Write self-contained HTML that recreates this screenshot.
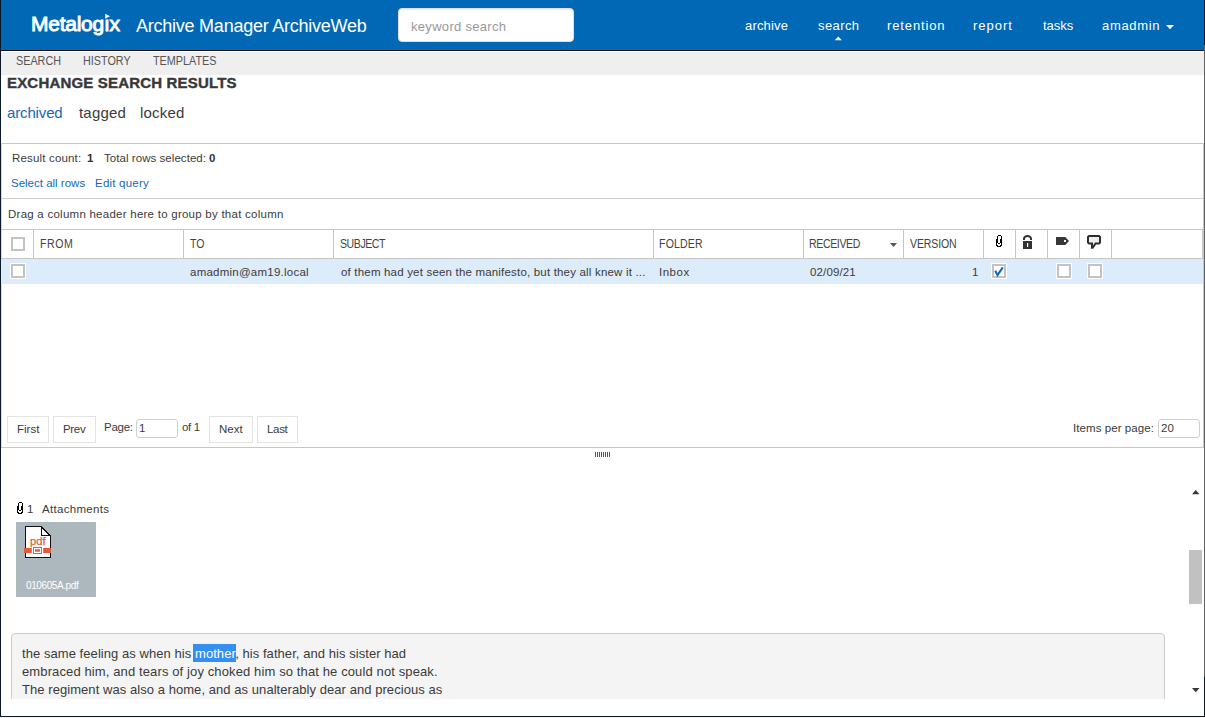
<!DOCTYPE html>
<html><head><meta charset="utf-8"><title>Archive Manager ArchiveWeb</title>
<style>
html,body{margin:0;padding:0}
body{width:1205px;height:718px;overflow:hidden;position:relative;background:#fff;font-family:"Liberation Sans",sans-serif}
.a{position:absolute}
.t{position:absolute;white-space:nowrap;font-family:"Liberation Sans",sans-serif}
.vs{position:absolute;width:1px;background:#c6c6c6}
.cb{position:absolute;box-sizing:border-box;width:14px;height:14px;border:2px solid #c3c3c3;background:#fff}
.btn{position:absolute;box-sizing:border-box;height:27px;border:1px solid #e3e3e3;background:#fff}
</style></head><body>
<!-- header -->
<div class="a" style="left:0;top:0;width:1205px;height:50px;background:#0168b6"></div>
<div class="a" style="left:0;top:50px;width:1205px;height:1px;background:#0c0f14"></div>
<div class="a" style="left:398px;top:8px;width:176px;height:34px;box-sizing:border-box;background:#fff;border:1px solid #e4ddd8;border-radius:4px;box-shadow:inset 0 1px 1px rgba(0,0,0,.08)"></div>
<svg class="a" style="left:104px;top:13px" width="8" height="7" viewBox="0 0 8 7"><path d="M1.2 0.8 L6 3.2 L1.2 5.8 Z" fill="#fff"/></svg>
<!-- subnav -->
<div class="a" style="left:0;top:52px;width:1205px;height:23px;background:#efefef"></div>
<!-- results box -->
<div class="a" style="left:1px;top:143px;width:1203px;height:1px;background:#c6c6c6"></div>
<div class="a" style="left:1203px;top:143px;width:1px;height:305px;background:#c6c6c6"></div>
<div class="a" style="left:1px;top:143px;width:1px;height:304px;background:#dcdcdc"></div>
<div class="a" style="left:1px;top:198px;width:1202px;height:1px;background:#cfcfcf"></div>
<!-- grid header -->
<div class="a" style="left:1px;top:229px;width:1202px;height:1px;background:#c6c6c6"></div>
<div class="a" style="left:1px;top:258px;width:1202px;height:1px;background:#c6c6c6"></div>
<div class="a" style="left:1202px;top:229px;width:1px;height:30px;background:#c6c6c6"></div>
<div class="vs" style="left:33px;top:230px;height:28px"></div>
<div class="vs" style="left:183px;top:230px;height:28px"></div>
<div class="vs" style="left:333px;top:230px;height:28px"></div>
<div class="vs" style="left:653px;top:230px;height:28px"></div>
<div class="vs" style="left:803px;top:230px;height:28px"></div>
<div class="vs" style="left:903px;top:230px;height:28px"></div>
<div class="vs" style="left:983px;top:230px;height:28px"></div>
<div class="vs" style="left:1015px;top:230px;height:28px"></div>
<div class="vs" style="left:1047px;top:230px;height:28px"></div>
<div class="vs" style="left:1079px;top:230px;height:28px"></div>
<div class="vs" style="left:1111px;top:230px;height:28px"></div>
<div class="cb" style="left:11px;top:237px"></div>
<!-- sort arrow -->
<!-- icons -->
<svg class="a" style="left:996px;top:235px" width="6" height="12" viewBox="0 0 6 12" shape-rendering="crispEdges" fill="#000"><rect x="2" y="0" width="1" height="1"/><rect x="3" y="0" width="1" height="1"/><rect x="4" y="0" width="1" height="1"/><rect x="1" y="1" width="1" height="1"/><rect x="5" y="1" width="1" height="1"/><rect x="1" y="2" width="1" height="1"/><rect x="5" y="2" width="1" height="1"/><rect x="1" y="3" width="1" height="1"/><rect x="5" y="3" width="1" height="1"/><rect x="0" y="4" width="1" height="1"/><rect x="1" y="4" width="1" height="1"/><rect x="4" y="4" width="1" height="1"/><rect x="5" y="4" width="1" height="1"/><rect x="0" y="5" width="1" height="1"/><rect x="1" y="5" width="1" height="1"/><rect x="4" y="5" width="1" height="1"/><rect x="5" y="5" width="1" height="1"/><rect x="0" y="6" width="1" height="1"/><rect x="1" y="6" width="1" height="1"/><rect x="4" y="6" width="1" height="1"/><rect x="5" y="6" width="1" height="1"/><rect x="0" y="7" width="1" height="1"/><rect x="1" y="7" width="1" height="1"/><rect x="4" y="7" width="1" height="1"/><rect x="5" y="7" width="1" height="1"/><rect x="0" y="8" width="1" height="1"/><rect x="2" y="8" width="1" height="1"/><rect x="3" y="8" width="1" height="1"/><rect x="5" y="8" width="1" height="1"/><rect x="0" y="9" width="1" height="1"/><rect x="5" y="9" width="1" height="1"/><rect x="0" y="10" width="1" height="1"/><rect x="1" y="10" width="1" height="1"/><rect x="4" y="10" width="1" height="1"/><rect x="5" y="10" width="1" height="1"/><rect x="1" y="11" width="1" height="1"/><rect x="2" y="11" width="1" height="1"/><rect x="3" y="11" width="1" height="1"/><rect x="4" y="11" width="1" height="1"/></svg>
<svg class="a" style="left:1021px;top:233px" width="14" height="18" viewBox="0 0 14 18"><path d="M3 7 V5.8 A3.5 2.8 0 0 1 10 5.8 V7" fill="none" stroke="#333" stroke-width="2"/><rect x="2" y="8" width="9" height="8" fill="#333"/><rect x="6" y="10" width="1.2" height="4" fill="#fff"/></svg>
<svg class="a" style="left:1053px;top:233px" width="20" height="18" viewBox="0 0 20 18"><path d="M3 4 H12.3 L16 8 L12.3 12 H3 Z" fill="#383838"/><rect x="11" y="7" width="2" height="2" fill="#fff"/></svg>
<svg class="a" style="left:1084px;top:232px" width="20" height="20" viewBox="0 0 20 20"><path d="M4.6 3 H15.4 L17 4.6 V10.9 L15.4 12.5 H12.1 L9.2 16.8 H7 V12.5 H4.6 L3 10.9 V4.6 Z" fill="#2e2e2e"/><path d="M5.3 5 H14.7 L15 5.3 V10.2 L14.7 10.5 H11 L9 13.4 V10.5 H5.3 L5 10.2 V5.3 Z" fill="#eeeef0"/></svg>
<!-- data row -->
<div class="a" style="left:1px;top:259px;width:1202px;height:25px;background:#ddecfa"></div>
<div class="cb" style="left:11px;top:264px;box-shadow:0 0 0 1px #fff"></div>
<div class="cb" style="left:992px;top:264px;box-shadow:0 0 0 1px #fff"></div>
<svg class="a" style="left:992px;top:264px" width="14" height="14" viewBox="0 0 14 14"><path d="M3.2 6.6 L5.5 11.2 L10.8 3.4" fill="none" stroke="#0e6bbf" stroke-width="2.1" stroke-linejoin="miter"/></svg>
<div class="cb" style="left:1057px;top:264px;box-shadow:0 0 0 1px #fff"></div>
<div class="cb" style="left:1088px;top:264px;box-shadow:0 0 0 1px #fff"></div>
<!-- pager -->
<div class="btn" style="left:7px;top:416px;width:42px"></div>
<div class="btn" style="left:53px;top:416px;width:43px"></div>
<div class="a" style="left:136px;top:419px;width:42px;height:19px;box-sizing:border-box;border:1px solid #cfcfcf;border-radius:3px;background:#fff"></div>
<div class="btn" style="left:209px;top:416px;width:44px"></div>
<div class="btn" style="left:257px;top:416px;width:41px"></div>
<div class="a" style="left:1158px;top:419px;width:42px;height:19px;box-sizing:border-box;border:1px solid #cfcfcf;border-radius:3px;background:#fff"></div>
<div class="a" style="left:1px;top:447px;width:1203px;height:1px;background:#c6c6c6"></div>
<!-- splitter handle -->
<div class="a" style="left:595px;top:452px;width:15px;height:5px;background:repeating-linear-gradient(90deg,#555 0 1px,transparent 1px 2px)"></div>
<!-- scroll arrows/thumb -->
<div class="a" style="left:1189px;top:550px;width:13px;height:54px;background:#c1c1c1"></div>
<!-- attachments -->
<svg class="a" style="left:17px;top:502px" width="6" height="12" viewBox="0 0 6 12" shape-rendering="crispEdges" fill="#000"><rect x="2" y="0" width="1" height="1"/><rect x="3" y="0" width="1" height="1"/><rect x="4" y="0" width="1" height="1"/><rect x="1" y="1" width="1" height="1"/><rect x="5" y="1" width="1" height="1"/><rect x="1" y="2" width="1" height="1"/><rect x="5" y="2" width="1" height="1"/><rect x="1" y="3" width="1" height="1"/><rect x="5" y="3" width="1" height="1"/><rect x="0" y="4" width="1" height="1"/><rect x="1" y="4" width="1" height="1"/><rect x="4" y="4" width="1" height="1"/><rect x="5" y="4" width="1" height="1"/><rect x="0" y="5" width="1" height="1"/><rect x="1" y="5" width="1" height="1"/><rect x="4" y="5" width="1" height="1"/><rect x="5" y="5" width="1" height="1"/><rect x="0" y="6" width="1" height="1"/><rect x="1" y="6" width="1" height="1"/><rect x="4" y="6" width="1" height="1"/><rect x="5" y="6" width="1" height="1"/><rect x="0" y="7" width="1" height="1"/><rect x="1" y="7" width="1" height="1"/><rect x="4" y="7" width="1" height="1"/><rect x="5" y="7" width="1" height="1"/><rect x="0" y="8" width="1" height="1"/><rect x="2" y="8" width="1" height="1"/><rect x="3" y="8" width="1" height="1"/><rect x="5" y="8" width="1" height="1"/><rect x="0" y="9" width="1" height="1"/><rect x="5" y="9" width="1" height="1"/><rect x="0" y="10" width="1" height="1"/><rect x="1" y="10" width="1" height="1"/><rect x="4" y="10" width="1" height="1"/><rect x="5" y="10" width="1" height="1"/><rect x="1" y="11" width="1" height="1"/><rect x="2" y="11" width="1" height="1"/><rect x="3" y="11" width="1" height="1"/><rect x="4" y="11" width="1" height="1"/></svg>
<div class="a" style="left:16px;top:522px;width:80px;height:75px;background:#adb8be"></div>
<svg class="a" style="left:16px;top:522px" width="40" height="40" viewBox="0 0 40 40"><path d="M9.5 4.5 H25 L34 13.5 V35.5 H9.5 Z" fill="#fff" stroke="#111" stroke-width="1" shape-rendering="crispEdges"/><path d="M25.5 4.5 V13.5 H34" fill="none" stroke="#111" stroke-width="1" shape-rendering="crispEdges"/><rect x="8" y="26" width="27" height="5" fill="#e05b3a"/><rect x="15.8" y="24.5" width="11.4" height="9" fill="#fff"/><rect x="17.5" y="25.5" width="8" height="6" fill="none" stroke="#e05b3a" stroke-width="1"/><rect x="19" y="27.3" width="5" height="2.4" fill="#e05b3a"/><text x="14" y="23.2" font-family="Liberation Sans" font-size="10" stroke="#e0603e" stroke-width="0.25" fill="#e0603e" textLength="15.6" lengthAdjust="spacingAndGlyphs">pdf</text></svg>
<!-- body box -->
<div class="a" style="left:11px;top:633px;width:1154px;height:70px;box-sizing:border-box;border:1px solid #cbcbcb;border-radius:4px;background:#f4f4f4"></div>
<div class="a" style="left:0;top:699px;width:1204px;height:18px;background:#fff"></div>
<div class="a" style="left:193px;top:644px;width:43px;height:18px;background:#3390f2"></div>
<div class="t" style="left:31px;top:-2px;font-size:21px;line-height:52px;color:#fff;letter-spacing:-0.25px;-webkit-text-stroke:0.9px #fff">Metalogıx</div>
<div class="t" style="left:136px;top:3px;font-size:18px;line-height:46px;color:#fff;letter-spacing:-0.24px">Archive Manager ArchiveWeb</div>
<div class="t" style="left:411px;top:9px;font-size:13px;line-height:36px;color:#999;letter-spacing:0.308px">keyword search</div>
<div class="t" style="left:745px;top:8px;font-size:13px;line-height:36px;color:#fff;letter-spacing:0.167px">archive</div>
<div class="t" style="left:818px;top:8px;font-size:13px;line-height:36px;color:#fff;letter-spacing:0.4px">search</div>
<div class="t" style="left:887px;top:8px;font-size:13px;line-height:36px;color:#fff;letter-spacing:0.875px">retention</div>
<div class="t" style="left:973px;top:8px;font-size:13px;line-height:36px;color:#fff;letter-spacing:1.0px">report</div>
<div class="t" style="left:1043px;top:8px;font-size:13px;line-height:36px;color:#fff">tasks</div>
<div class="t" style="left:1102px;top:8px;font-size:13px;line-height:36px;color:#fff;letter-spacing:0.667px">amadmin</div>
<div class="t" style="left:16px;top:44px;font-size:12px;line-height:34px;color:#555;transform:scaleX(0.9);transform-origin:0 0">SEARCH</div>
<div class="t" style="left:83px;top:44px;font-size:12px;line-height:34px;color:#555;transform:scaleX(0.9);transform-origin:0 0">HISTORY</div>
<div class="t" style="left:153px;top:44px;font-size:12px;line-height:34px;color:#555;transform:scaleX(0.9);transform-origin:0 0">TEMPLATES</div>
<div class="t" style="left:7px;top:63px;font-size:15px;line-height:40px;color:#383838;font-weight:700;letter-spacing:0.182px;-webkit-text-stroke:0.4px #383838">EXCHANGE SEARCH RESULTS</div>
<div class="t" style="left:7px;top:93px;font-size:15px;line-height:40px;color:#1269bb;letter-spacing:-0.143px">archived</div>
<div class="t" style="left:79px;top:93px;font-size:15px;line-height:40px;color:#3b3b3b;letter-spacing:0.2px">tagged</div>
<div class="t" style="left:140px;top:93px;font-size:15px;line-height:40px;color:#3b3b3b;letter-spacing:0.2px">locked</div>
<div class="t" style="left:12px;top:142px;font-size:11.5px;line-height:33px;color:#3b3b3b;letter-spacing:0.167px">Result count:</div>
<div class="t" style="left:87px;top:142px;font-size:11.5px;line-height:33px;color:#333;font-weight:700">1</div>
<div class="t" style="left:104px;top:142px;font-size:11.5px;line-height:33px;color:#3b3b3b;letter-spacing:0.053px">Total rows selected:</div>
<div class="t" style="left:209px;top:142px;font-size:11.5px;line-height:33px;color:#333;font-weight:700">0</div>
<div class="t" style="left:11px;top:167px;font-size:11.5px;line-height:33px;color:#1269bb">Select all rows</div>
<div class="t" style="left:95px;top:167px;font-size:11.5px;line-height:33px;color:#1269bb;letter-spacing:0.222px">Edit query</div>
<div class="t" style="left:8px;top:198px;font-size:11.5px;line-height:33px;color:#3b3b3b;letter-spacing:0.25px">Drag a column header here to group by that column</div>
<div class="t" style="left:40px;top:227px;font-size:12px;line-height:34px;color:#444;letter-spacing:0.667px;transform:scaleX(0.88);transform-origin:0 0">FROM</div>
<div class="t" style="left:190px;top:227px;font-size:12px;line-height:34px;color:#444;transform:scaleX(0.88);transform-origin:0 0">TO</div>
<div class="t" style="left:340px;top:227px;font-size:12px;line-height:34px;color:#444;letter-spacing:-0.5px;transform:scaleX(0.88);transform-origin:0 0">SUBJECT</div>
<div class="t" style="left:659px;top:227px;font-size:12px;line-height:34px;color:#444;letter-spacing:0.2px;transform:scaleX(0.88);transform-origin:0 0">FOLDER</div>
<div class="t" style="left:809px;top:227px;font-size:12px;line-height:34px;color:#444;letter-spacing:-0.429px;transform:scaleX(0.88);transform-origin:0 0">RECEIVED</div>
<div class="t" style="left:910px;top:227px;font-size:12px;line-height:34px;color:#444;letter-spacing:-0.167px;transform:scaleX(0.88);transform-origin:0 0">VERSION</div>
<div class="t" style="left:190px;top:256px;font-size:11.5px;line-height:33px;color:#3b3b3b;letter-spacing:0.235px">amadmin@am19.local</div>
<div class="t" style="left:341px;top:256px;font-size:11.5px;line-height:33px;color:#3b3b3b;letter-spacing:0.186px">of them had yet seen the manifesto, but they all knew it ...</div>
<div class="t" style="left:659px;top:256px;font-size:11.5px;line-height:33px;color:#3b3b3b;letter-spacing:0.5px">Inbox</div>
<div class="t" style="left:810px;top:256px;font-size:11.5px;line-height:33px;color:#3b3b3b;letter-spacing:0.143px">02/09/21</div>
<div class="t" style="left:972px;top:256px;font-size:11.5px;line-height:33px;color:#3b3b3b">1</div>
<div class="t" style="left:17px;top:413px;font-size:11.5px;line-height:33px;color:#3b3b3b">First</div>
<div class="t" style="left:63px;top:413px;font-size:11.5px;line-height:33px;color:#3b3b3b;letter-spacing:-0.333px">Prev</div>
<div class="t" style="left:104px;top:411px;font-size:11.5px;line-height:33px;color:#3b3b3b;letter-spacing:-0.25px">Page:</div>
<div class="t" style="left:139px;top:412px;font-size:11.5px;line-height:33px;color:#3b3b3b">1</div>
<div class="t" style="left:182px;top:411px;font-size:11.5px;line-height:33px;color:#3b3b3b;letter-spacing:-0.333px">of 1</div>
<div class="t" style="left:219px;top:413px;font-size:11.5px;line-height:33px;color:#3b3b3b">Next</div>
<div class="t" style="left:267px;top:413px;font-size:11.5px;line-height:33px;color:#3b3b3b;letter-spacing:-0.333px">Last</div>
<div class="t" style="left:1073px;top:412px;font-size:11.5px;line-height:33px;color:#3b3b3b;letter-spacing:0.071px">Items per page:</div>
<div class="t" style="left:1161px;top:412px;font-size:11.5px;line-height:33px;color:#3b3b3b">20</div>
<div class="t" style="left:27px;top:493px;font-size:11.5px;line-height:33px;color:#3b3b3b">1</div>
<div class="t" style="left:42px;top:493px;font-size:11.5px;line-height:33px;color:#3b3b3b;letter-spacing:0.3px">Attachments</div>
<div class="t" style="left:26px;top:571px;font-size:10px;line-height:30px;color:#fff;letter-spacing:-0.4px">010605A.pdf</div>
<div class="t" style="left:22px;top:636px;font-size:13px;line-height:36px;color:#3b3b3b;letter-spacing:0.06px">the same feeling as when his <span style="color:#fff">mother</span>, his father, and his sister had</div>
<div class="t" style="left:22px;top:654px;font-size:13px;line-height:36px;color:#3b3b3b;letter-spacing:0.118px">embraced him, and tears of joy choked him so that he could not speak.</div>
<div class="t" style="left:22px;top:672px;font-size:13px;line-height:36px;color:#3b3b3b;letter-spacing:0.059px">The regiment was also a home, and as unalterably dear and precious as</div>
<svg class="a" style="left:0;top:0" width="1205" height="718" viewBox="0 0 1205 718">
<polygon points="834.8,40.2 838.3,36.6 841.8,40.2" fill="#fff"/>
<polygon points="1166,25 1174,25 1170,29.2" fill="#fff"/>
<polygon points="890,243 897,243 893.5,247" fill="#555"/>
<polygon points="1192,494.2 1199.5,494.2 1195.75,490" fill="#383838"/>
<polygon points="1192,688 1199.5,688 1195.75,692.2" fill="#383838"/>
</svg>
<!-- frame -->
<div class="a" style="left:0;top:0;width:1px;height:717px;background:#0b1828"></div>
<div class="a" style="left:1204px;top:0;width:1px;height:45px;background:#0b1828"></div>
<div class="a" style="left:1204px;top:45px;width:1px;height:632px;background:#626262"></div>
<div class="a" style="left:1204px;top:677px;width:1px;height:40px;background:#0b1828"></div>
<div class="a" style="left:0;top:716px;width:1205px;height:1px;background:#0b1828"></div>
<div class="a" style="left:0;top:717px;width:1205px;height:1px;background:#f4f4f4"></div>
</body></html>
